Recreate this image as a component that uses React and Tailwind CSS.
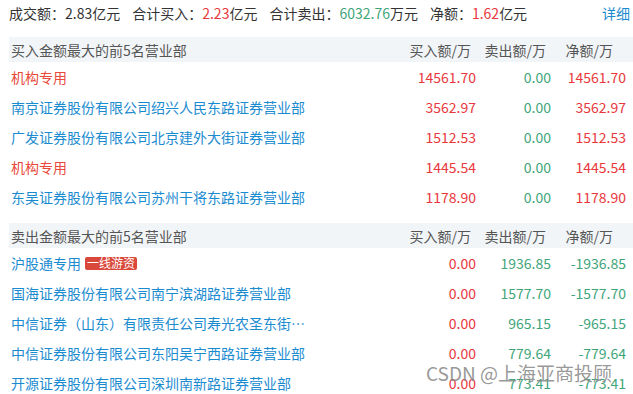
import React from 'react';

const buyRows = [
  { name: '机构专用', inst: true, buy: '14561.70', sell: '0.00', net: '14561.70' },
  { name: '南京证券股份有限公司绍兴人民东路证券营业部', buy: '3562.97', sell: '0.00', net: '3562.97' },
  { name: '广发证券股份有限公司北京建外大街证券营业部', buy: '1512.53', sell: '0.00', net: '1512.53' },
  { name: '机构专用', inst: true, buy: '1445.54', sell: '0.00', net: '1445.54' },
  { name: '东吴证券股份有限公司苏州干将东路证券营业部', buy: '1178.90', sell: '0.00', net: '1178.90' },
];

const sellRows = [
  { name: '沪股通专用', tag: '一线游资', buy: '0.00', sell: '1936.85', net: '-1936.85' },
  { name: '国海证券股份有限公司南宁滨湖路证券营业部', buy: '0.00', sell: '1577.70', net: '-1577.70' },
  { name: '中信证券（山东）有限责任公司寿光农圣东街营业部', buy: '0.00', sell: '965.15', net: '-965.15' },
  { name: '中信证券股份有限公司东阳吴宁西路证券营业部', buy: '0.00', sell: '779.64', net: '-779.64' },
  { name: '开源证券股份有限公司深圳南新路证券营业部', buy: '0.00', sell: '773.41', net: '-773.41' },
];

const numColor = (v) => (v.startsWith('-') ? 'text-[#3fa57a]' : 'text-[#e8383d]');

const Section = ({ title, rows }) => (
  <div className="ml-[9px]">
    <div className="flex h-[25px] items-center bg-[#f2f5f8] pl-[2px] pr-[7px] text-[#555]">
      <div className="flex-1">{title}</div>
      <div className="w-[75px] pr-[5px] text-right">买入额/万</div>
      <div className="w-[75px] pr-[5px] text-right">卖出额/万</div>
      <div className="w-[75px] pr-[13px] text-right">净额/万</div>
    </div>
    {rows.map((r, i) => (
      <div key={i} className="flex h-[30px] items-center pl-[2px] pr-[7px]">
        <div className="flex min-w-0 flex-1 items-center">
          <span
            className={`max-w-[296px] truncate leading-[20px] ${r.inst ? 'text-[#e8493a]' : 'text-[#1b8bd0]'}`}
          >
            {r.name}
          </span>
          {r.tag && (
            <span className="ml-[4px] flex h-[13px] items-center rounded-[2px] bg-[#d9483b] px-[2px] text-[12px] leading-none text-white">
              {r.tag}
            </span>
          )}
        </div>
        <div className="w-[75px] text-right text-[#e8383d]">{r.buy}</div>
        <div className="w-[75px] text-right text-[#3fa57a]">{r.sell}</div>
        <div className={`w-[75px] text-right ${numColor(r.net)}`}>{r.net}</div>
      </div>
    ))}
  </div>
);

export default function App() {
  return (
    <div
      className="relative h-[394px] w-[633px] overflow-hidden bg-white text-[14px] leading-none text-[#333]"
      style={{ fontFamily: '"Noto Sans CJK SC", "Noto Sans", sans-serif' }}
    >
      <div className="flex h-[25px] items-center pl-[9px] pr-[3px]">
        <span>成交额：2.83亿元</span>
        <span className="ml-[12px]">
          合计买入：<span className="text-[#e8383d]">2.23</span>亿元
        </span>
        <span className="ml-[12px]">
          合计卖出：<span className="text-[#3fa57a]">6032.76</span>万元
        </span>
        <span className="ml-[12px]">
          净额：<span className="text-[#e8383d]">1.62</span>亿元
        </span>
        <span className="ml-auto text-[#1b8bd0]">详细</span>
      </div>

      <div className="mt-[12px]">
        <Section title="买入金额最大的前5名营业部" rows={buyRows} />
      </div>
      <div className="mt-[11px]">
        <Section title="卖出金额最大的前5名营业部" rows={sellRows} />
      </div>

      {/* watermark over the last row */}
      <div className="pointer-events-none absolute left-[426px] top-[363px] text-[19px] leading-none text-[#8c8c8c]/90">
        CSDN @上海亚商投顾
      </div>
    </div>
  );
}
